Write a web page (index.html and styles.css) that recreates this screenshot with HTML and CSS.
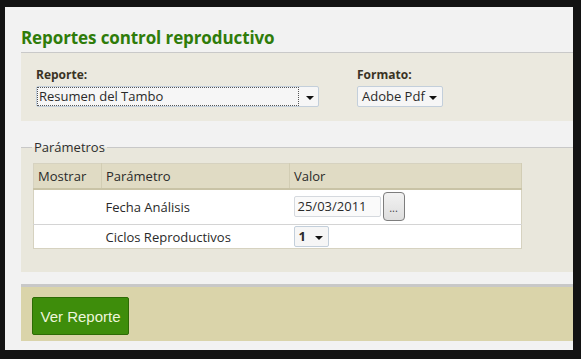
FILE: index.html
```html
<!DOCTYPE html>
<html lang="es">

<head>
    <meta charset="UTF-8">
    <title>Reportes control reproductivo</title>
    <link rel="stylesheet" href="styles.css">
</head>

<body>
    <div class="frame">
        <div class="panel">
            <h1 class="title">Reportes control reproductivo</h1>

            <div class="filters">
                <div class="field">
                    <label>Reporte:</label>
                    <div class="combo comboReporte">
                        <span class="comboText focused">Resumen del Tambo</span>
                        <span class="arrow"></span>
                    </div>
                </div>
                <div class="field">
                    <label>Formato:</label>
                    <div class="combo comboFormato">
                        <span class="comboText">Adobe Pdf</span>
                        <span class="arrow"></span>
                    </div>
                </div>
            </div>

            <fieldset class="params">
                <legend>Parámetros</legend>
                <table class="grid">
                    <thead>
                        <tr>
                            <th class="colShow">Mostrar</th>
                            <th class="colName">Parámetro</th>
                            <th class="colValue">Valor</th>
                        </tr>
                    </thead>
                    <tbody>
                        <tr class="rowTall">
                            <td></td>
                            <td>Fecha Análisis</td>
                            <td>
                                <div class="dateField">
                                    <span class="dateInput">25/03/2011</span>
                                    <span class="dateBtn">...</span>
                                </div>
                            </td>
                        </tr>
                        <tr>
                            <td></td>
                            <td>Ciclos Reproductivos</td>
                            <td>
                                <div class="combo comboSmall">
                                    <span class="comboText">1</span>
                                    <span class="arrow"></span>
                                </div>
                            </td>
                        </tr>
                    </tbody>
                </table>
            </fieldset>

            <div class="actions">
                <button class="btnGreen">Ver Reporte</button>
            </div>
        </div>
    </div>
</body>

</html>
```

FILE: styles.css
```css
* {
    padding: 0;
    margin: 0;
    box-sizing: border-box;
}

body {
    background: #131313;
    font-family: "Open Sans", "DejaVu Sans", sans-serif;
    font-size: 13px;
    color: #2a2a2a;
}

.frame {
    width: 581px;
    height: 359px;
    padding: 7px 8px 9px 5px;
}

.panel {
    height: 100%;
    background: #f2f2f2;
    padding: 20px 0 0 16px;
}

.title {
    font-size: 17px;
    font-weight: bold;
    line-height: 22px;
    color: #2f7c0a;
    padding-bottom: 3px;
    border-bottom: 1px solid #c9c9c9;
    letter-spacing: -0.1px;
}

.filters {
    background: #ebe9df;
    padding: 15px 0 14px 15px;
    display: flex;
    gap: 38px;
}

.field label {
    display: block;
    font-size: 12px;
    font-weight: bold;
    line-height: 14px;
    color: #3a3324;
    margin-bottom: 4px;
}

.combo {
    display: flex;
    align-items: center;
    height: 21px;
    background: #f6f6f6;
    border: 1px solid #c3cfdb;
    border-radius: 2px;
    padding: 0 4px 0 1px;
}

.comboText {
    flex: 1;
    line-height: 17px;
    padding-left: 1px;
    white-space: nowrap;
}

.comboText.focused {
    outline: 1px dotted #555;
    margin-right: 8px;
}

.arrow {
    width: 0;
    height: 0;
    border-left: 4px solid transparent;
    border-right: 4px solid transparent;
    border-top: 4px solid #111;
    margin-top: 2px;
}

.comboReporte {
    width: 283px;
}

.comboFormato {
    width: 86px;
    padding: 0 5px 0 3px;
}

.params {
    margin: 18px 0 0;
    border: 0;
    border-top: 1px solid #c8c8c8;
    background: #e9e7dc;
    padding: 8px 0 23px 12px;
}

.params legend {
    margin-left: -1px;
    padding: 0 2px;
    line-height: 16px;
    font-size: 13px;
    color: #2e2e2e;
}

.grid {
    width: 489px;
    border-collapse: collapse;
    border: 1px solid #d6d2c0;
}

.grid th {
    text-align: left;
    font-weight: normal;
    height: 25px;
    background: #e0dbc4;
    border-right: 1px solid #d2cdb4;
    border-bottom: 2px solid #c9c3a6;
    padding: 0 4px;
}

.colShow {
    width: 68px;
}

.colName {
    width: 188px;
}

.grid td {
    background: #fff;
    height: 24px;
    border-top: 1px solid #d4d4d4;
    padding: 0 4px;
}

.grid .rowTall td {
    height: 36px;
}

.dateField {
    display: flex;
    align-items: center;
    gap: 2px;
}

.dateInput {
    width: 87px;
    height: 21px;
    line-height: 19px;
    border: 1px solid #d5d9de;
    border-radius: 2px;
    background: #fafafa;
    padding-left: 3px;
}

.dateBtn {
    width: 22px;
    height: 29px;
    border: 1px solid #7d7d7d;
    border-radius: 4px;
    background: linear-gradient(#f2f2f2, #dedede);
    text-align: center;
    line-height: 30px;
    font-size: 11px;
    color: #444;
}

.comboSmall {
    width: 35px;
    padding: 0 5px 0 3px;
}

.comboSmall .comboText {
    font-weight: bold;
}

.actions {
    margin-top: 12px;
    border-top: 3px solid #c8c8c8;
    background: #dad4aa;
    height: 57px;
    padding: 10px 0 0 11px;
}

.btnGreen {
    width: 97px;
    height: 38px;
    background: #3e8d0b;
    border: 1px solid #2d6b05;
    border-radius: 2px;
    color: #eef6dc;
    font-family: "Liberation Sans", Arial, sans-serif;
    font-size: 15px;
}
```
